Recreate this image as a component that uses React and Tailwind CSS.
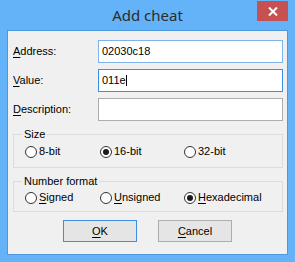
import React from "react";

function U({ children }) {
  return <span className="underline underline-offset-[2px]">{children}</span>;
}

function Radio({ checked, children, className = "" }) {
  return (
    <div className={"flex items-center " + className}>
      <span className="w-[12px] h-[12px] rounded-full border border-[#333333] bg-white flex items-center justify-center shrink-0">
        {checked && <span className="w-[6px] h-[6px] rounded-full bg-[#1a1a1a]" />}
      </span>
      <span className="ml-[2px] leading-[13px]">{children}</span>
    </div>
  );
}

function Row({ label, value, border, caret }) {
  return (
    <div className="flex items-center">
      <div className="w-[85px] leading-[13px]">{label}</div>
      <div className={"flex-1 h-[23px] bg-white border flex items-center pl-[3px] " + border}>
        <span className="leading-[13px]">{value}</span>
        {caret && <span className="inline-block w-px h-[11px] bg-black" />}
      </div>
    </div>
  );
}

export default function App() {
  return (
    <div
      className="w-[295px] h-[262px] bg-[#64b2f7] flex flex-col text-[11px] text-black"
      style={{ fontFamily: '"Liberation Sans", Arial, sans-serif' }}
    >
      <div className="h-[30px] grid grid-cols-[1fr_auto_1fr]">
        <div />
        <div
          className="text-[15px] leading-[30px] text-[#2c2c2c]"
          style={{ fontFamily: '"Noto Sans", "Open Sans", sans-serif' }}
        >
          Add cheat
        </div>
        <div className="flex justify-end items-start">
          <div className="mt-[1px] mr-[7px] w-[31px] h-[20px] bg-[#c75050] flex items-center justify-center">
            <svg width="10" height="9" viewBox="0 0 10 9">
              <path d="M1 0.5 L9 8.5 M9 0.5 L1 8.5" stroke="white" strokeWidth="2" />
            </svg>
          </div>
        </div>
      </div>
      <div className="mx-[7px] h-[225px] border border-[#4f97dc] bg-[#f0f0f0] pt-[9px] pl-[5px] pr-[4px] flex flex-col">
        <div className="flex flex-col gap-[6px]">
          <Row label={<><U>A</U>ddress:</>} value="02030c18" border="border-[#7eb4ea]" />
          <Row label={<><U>V</U>alue:</>} value="011e" border="border-[#3e8ee0]" caret />
          <Row label={<><U>D</U>escription:</>} value="" border="border-[#adadad]" />
        </div>
        <fieldset className="mt-[7px] border border-[#dcdcdc] pb-[9px] pl-[11px]">
          <legend className="ml-[-3px] px-[2px] leading-[13px]">Size</legend>
          <div className="flex pt-[4px]">
            <Radio className="w-[75px]">8-bit</Radio>
            <Radio className="w-[84px]" checked>16-bit</Radio>
            <Radio>32-bit</Radio>
          </div>
        </fieldset>
        <fieldset className="mt-[7px] border border-[#dcdcdc] pb-[7px] pl-[11px]">
          <legend className="ml-[-3px] px-[2px] leading-[13px]">Number format</legend>
          <div className="flex pt-[3px]">
            <Radio className="w-[75px]"><U>S</U>igned</Radio>
            <Radio className="w-[84px]"><U>U</U>nsigned</Radio>
            <Radio checked><U>H</U>exadecimal</Radio>
          </div>
        </fieldset>
        <div className="mt-[8px] flex justify-center gap-[21px] pr-[1px]">
          <div className="w-[74px] h-[22px] border border-[#3c8ee0] bg-[#e5e5e5] flex items-center justify-center">
            <span className="leading-[13px]"><U>O</U>K</span>
          </div>
          <div className="w-[74px] h-[22px] border border-[#adadad] bg-[#e5e5e5] flex items-center justify-center">
            <span className="leading-[13px]"><U>C</U>ancel</span>
          </div>
        </div>
      </div>
    </div>
  );
}
